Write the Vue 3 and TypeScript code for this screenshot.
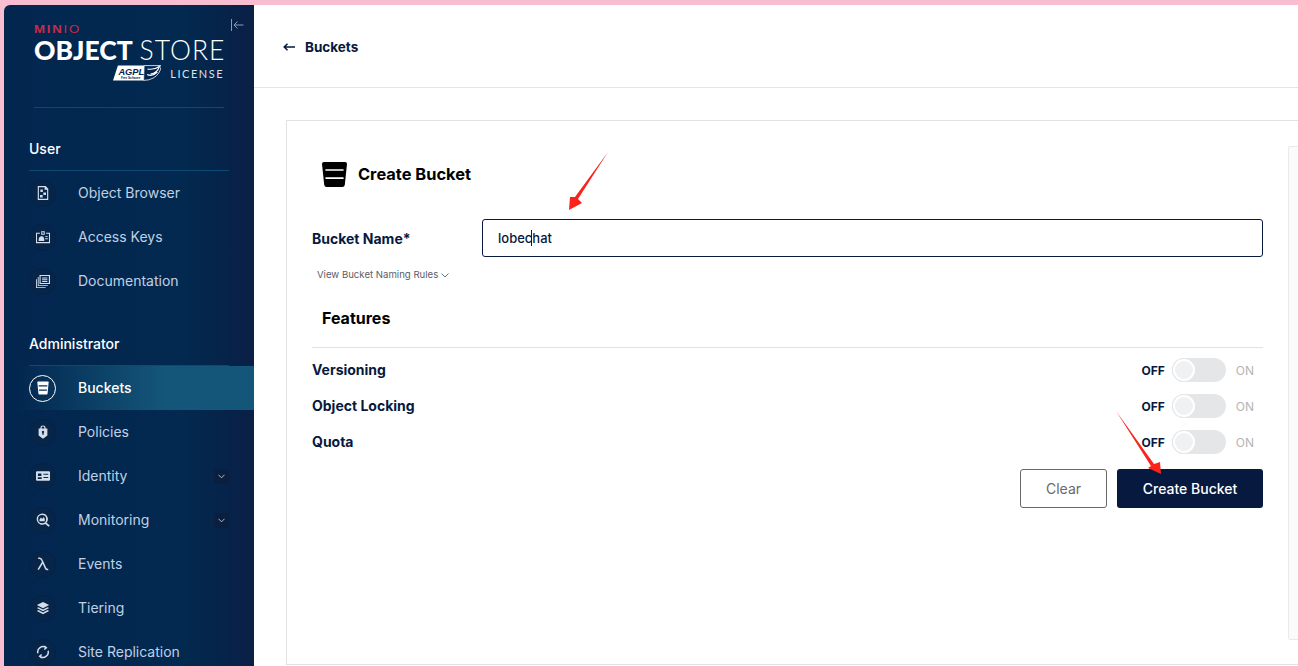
<script setup lang="ts">
interface NavItem {
  label: string
  fill?: string
  stroke?: string
  active?: boolean
  chevron?: boolean
}

const bucketPath =
  'M1.5 1.2Q1.5 .5 2.2 .5H13.8Q14.5 .5 14.5 1.2L13.2 14.6Q13.1 15.5 12.2 15.5H3.8Q2.9 15.5 2.8 14.6ZM3 4.8 3.1 6.2H12.9L13 4.8ZM3.5 9.6 3.6 11H12.4L12.5 9.6Z'

const titleBucketPath =
  'M0 1.2Q0 0 1.2 0H14.8Q16 0 16 1.2L14.6 14.6Q14.4 16 13 16H3Q1.6 16 1.4 14.6ZM2.2 4.6V5.6H13.8V4.6ZM2.2 9.8V10.8H13.8V9.8Z'

const userItems: NavItem[] = [
  {
    label: 'Object Browser',
    fill: 'M2 0H11L14 3V16H2ZM3.3 1.3V14.7H12.7V4.2H9.8V1.3ZM5 4H7.8V6.8H5ZM8.4 7.4H11.4V10.2H8.4ZM4.6 10.2H7.6V13H4.6Z',
  },
  {
    label: 'Access Keys',
    fill: 'M0 3H4.5V4.2H1.2V13.8H14.8V4.2H11.5V3H16V15H0ZM6 1.5H10V5.5H6ZM7.1 2.6V4.4H8.9V2.6ZM3 11.5Q3 7 6.5 7H6.8Q9.5 7 9.5 12.5H3ZM10.5 7H13.5V8H10.5ZM10.5 9.5H13.5V10.5H10.5Z',
  },
  {
    label: 'Documentation',
    fill: 'M4 1H16V11.5H4ZM5.3 2.3V10.2H14.7V2.3ZM7 4H13V5H7ZM7 6H13V7H7ZM7 8H13V9H7ZM2 3.5H3V12.8H13.5V13.8H2ZM0 6H1V15H11V16H0Z',
  },
]

const adminItems: NavItem[] = [
  { label: 'Buckets', fill: bucketPath, active: true },
  {
    label: 'Policies',
    fill: 'M5 4V3Q5 .5 8 .5T11 3V4H13V12L8 15.8 3 12V4ZM6.4 4H9.6V3Q9.6 1.8 8 1.8T6.4 3ZM8 6.5A1.4 1.4 0 0 0 7.2 9V11H8.8V9A1.4 1.4 0 0 0 8 6.5Z',
  },
  {
    label: 'Identity',
    fill: 'M1.2 2.5H14.8Q16 2.5 16 3.7V12.3Q16 13.5 14.8 13.5H1.2Q0 13.5 0 12.3V3.7Q0 2.5 1.2 2.5ZM2.2 5V8H6.2V5ZM2 9.5V11.5H6.5V9.5ZM8.5 5.5V6.7H14V5.5ZM8.5 9V10.2H14V9Z',
    chevron: true,
  },
  {
    label: 'Monitoring',
    fill: 'M7 .5A6.5 6.5 0 0 1 12 11.2L15.8 14.2 14.4 15.8 10.6 12.6A6.5 6.5 0 1 1 7 .5ZM7 2.4A4.6 4.6 0 1 0 7 11.6 4.6 4.6 0 0 0 7 2.4ZM4 7.4 5.6 5.2 7 6.8 8.6 4.6 10 6.6V9.5H4Z',
    chevron: true,
  },
  { label: 'Events', stroke: 'M2.5 1.5H4.2Q6 1.5 7 4L11 13Q11.6 14.5 14 14.2M7.6 6 2.5 14.5' },
  {
    label: 'Tiering',
    fill: 'M8 1 15 4.6 8 8.2 1 4.6ZM2.8 7 8 9.7 13.2 7 15 8 8 11.6 1 8ZM2.8 10.4 8 13.1 13.2 10.4 15 11.4 8 15 1 11.4Z',
  },
  {
    label: 'Site Replication',
    stroke: 'M2.2 9.5A6 6 0 0 1 11.5 3M13.8 6.5A6 6 0 0 1 4.5 13M9.5 1.2 11.8 3.2 9.5 5.2M6.5 10.8 4.2 12.8 6.5 14.8',
  },
]

const features = ['Versioning', 'Object Locking', 'Quota']
</script>

<template>
  <div class="page">
    <aside class="sidebar">
      <div class="brand">
        <svg class="collapse" viewBox="0 0 13 12" width="13" height="12" aria-hidden="true">
          <path d="M.5 0V12M12.5 6H3M6.5 2.5 3 6 6.5 9.5" fill="none" stroke="#8b9cb5" stroke-width="1" />
        </svg>
        <div class="minio"><b>MIN</b><span>IO</span></div>
        <div class="product"><b>OBJECT</b> <span>STORE</span></div>
        <div class="license-row">
          <svg class="agpl" viewBox="0 0 49 16" width="49" height="16" aria-hidden="true">
            <path d="M5 .5H32L31 15.5H0Z" fill="#fff" />
            <path d="M31.5 .5H49Q48 9 41 13 37 15.5 31 15.5Z" fill="#03264e" stroke="#fff" stroke-width=".8" />
            <path d="M35 4Q42 5 47 1.5 45 8 38 9M34.5 9.5Q40 12 45 7" fill="none" stroke="#fff" stroke-width="1.2" />
            <text x="5.5" y="10.5" font-size="9.4" font-weight="700" font-style="italic" fill="#03264e" font-family="Liberation Sans, sans-serif">AGPL</text>
            <text x="8" y="14.3" font-size="3" font-weight="700" fill="#03264e" font-family="Liberation Sans, sans-serif">Free Software</text>
          </svg>
          <span class="license">LICENSE</span>
        </div>
      </div>
      <div class="brand-rule"></div>

      <div class="section-label first">User</div>
      <div class="section-rule"></div>
      <nav class="nav">
        <div v-for="item in userItems" :key="item.label" class="nav-item">
          <span class="nav-icon">
            <svg viewBox="0 0 16 16" width="14" height="14" aria-hidden="true">
              <path v-if="item.fill" :d="item.fill" fill="currentColor" fill-rule="evenodd" />
            </svg>
          </span>
          <span class="nav-text">{{ item.label }}</span>
        </div>
      </nav>

      <div class="section-label second">Administrator</div>
      <div class="section-rule"></div>
      <nav class="nav">
        <div
          v-for="item in adminItems"
          :key="item.label"
          class="nav-item"
          :class="{ active: item.active }"
        >
          <span class="nav-icon">
            <svg viewBox="0 0 16 16" width="14" height="14" aria-hidden="true">
              <path v-if="item.fill" :d="item.fill" fill="currentColor" fill-rule="evenodd" />
              <path v-if="item.stroke" :d="item.stroke" fill="none" stroke="currentColor" stroke-width="1.7" />
            </svg>
          </span>
          <span class="nav-text">{{ item.label }}</span>
          <span v-if="item.chevron" class="chevron">
            <svg viewBox="0 0 8 5" width="7" height="5" aria-hidden="true">
              <path d="M.5 .5 4 4 7.5 .5" fill="none" stroke="#c5d2e2" stroke-width="1" />
            </svg>
          </span>
        </div>
      </nav>
    </aside>

    <main class="main">
      <header class="topbar">
        <svg viewBox="0 0 12 8" width="12" height="8" aria-hidden="true">
          <path d="M12 4H1.5M4.5 .8 1.2 4 4.5 7.2" fill="none" stroke="#07193e" stroke-width="1.5" />
        </svg>
        <span class="crumb">Buckets</span>
      </header>

      <section class="card">
        <form class="form" @submit.prevent>
          <div class="title-row">
            <svg viewBox="0 0 16 16" width="25" height="25" aria-hidden="true">
              <path :d="titleBucketPath" fill="#000" fill-rule="evenodd" />
            </svg>
            <h1 class="title">Create Bucket</h1>
          </div>

          <div class="name-row">
            <label class="field-label">Bucket Name*</label>
            <div class="input">lobec<i class="caret"></i>hat</div>
          </div>

          <div class="rules">
            <span>View Bucket Naming Rules</span>
            <svg viewBox="0 0 8 5" width="8" height="5" aria-hidden="true">
              <path d="M.5 .5 4 4 7.5 .5" fill="none" stroke="#55607a" stroke-width=".9" />
            </svg>
          </div>

          <h2 class="features-title">Features</h2>
          <div class="features-rule"></div>

          <div class="feature-list">
            <div v-for="feature in features" :key="feature" class="feature">
              <span class="field-label">{{ feature }}</span>
              <div class="switch-group">
                <span class="off">OFF</span>
                <span class="track"><span class="knob"></span></span>
                <span class="on">ON</span>
              </div>
            </div>
          </div>

          <div class="actions">
            <button type="button" class="btn clear">Clear</button>
            <button type="button" class="btn create">Create Bucket</button>
          </div>
        </form>
        <div class="help-panel"></div>
      </section>
    </main>

    <svg class="annotations" viewBox="0 0 1298 666" width="1298" height="666" aria-hidden="true">
      <path d="M608 152 578 199 582 203 569 210 570 197 575 197Z" fill="#f8231a" />
      <path d="M1116 411 1154 464 1160 462 1161 474 1148 468 1151 466Z" fill="#f8231a" />
    </svg>
  </div>
</template>

<style>
html,
body {
  margin: 0;
  padding: 0;
  background: #fff;
}
</style>

<style scoped>
.page {
  position: relative;
  display: flex;
  width: 1298px;
  height: 666px;
  padding: 5px 0 0 4px;
  box-sizing: border-box;
  overflow: hidden;
  background: #f9bdd2;
  font-family: Inter, "Liberation Sans", sans-serif;
}

.sidebar {
  flex: 0 0 250px;
  height: 661px;
  overflow: hidden;
  border-radius: 6px 0 0 0;
  background: linear-gradient(90deg, #03264f 0%, #02294f 72%, #0a1f46 100%);
  color: #fff;
}

.brand {
  position: relative;
  height: 102px;
  box-sizing: border-box;
  padding: 19px 30px 0;
}

.collapse {
  position: absolute;
  top: 14px;
  left: 227px;
}

.minio {
  height: 11px;
  font-family: "Liberation Sans", sans-serif;
  font-size: 10.5px;
  line-height: 11px;
  letter-spacing: 1.4px;
  color: #c72c48;
  transform: scaleX(1.26);
  transform-origin: left;
}

.minio b {
  font-weight: 700;
}

.minio span {
  font-weight: 400;
}

.product {
  margin-top: 2px;
  height: 26px;
  font-family: Lato, sans-serif;
  font-size: 26.5px;
  line-height: 26px;
  white-space: nowrap;
}

.product b {
  font-weight: 900;
}

.product span {
  font-weight: 300;
  letter-spacing: 1px;
}

.license-row {
  display: flex;
  align-items: center;
  gap: 9px;
  margin: 2px 0 0 79px;
  height: 16px;
}

.license {
  font-family: Lato, sans-serif;
  font-size: 11px;
  letter-spacing: 1.5px;
  color: #dbe3ec;
}

.brand-rule,
.section-rule {
  margin-left: 25px;
  width: 200px;
  height: 1px;
  background: #0c4a73;
}

.brand-rule {
  margin-left: 30px;
  width: 190px;
}

.section-label {
  margin-left: 25px;
  font-size: 14px;
  line-height: 18px;
  font-weight: 500;
  color: #fff;
}

.section-label.first {
  margin-top: 32px;
  margin-bottom: 12px;
}

.section-label.second {
  margin-top: 32px;
  margin-bottom: 12px;
}

.nav-item {
  display: flex;
  align-items: center;
  height: 44px;
  padding: 0 25px;
  color: #c0d0e4;
}

.nav-item.active {
  color: #fff;
  background: linear-gradient(90deg, rgba(20, 86, 122, 0) 5%, #14567a 65%);
}

.nav-icon {
  flex: 0 0 27px;
  display: flex;
  align-items: center;
  justify-content: center;
  width: 27px;
  height: 27px;
  box-sizing: border-box;
  border-radius: 50%;
  background: #072549;
  border: 1px solid #062247;
  color: #d5dfeb;
}

.active .nav-icon {
  background: transparent;
  border-color: #fff;
  color: #fff;
}

.nav-text {
  flex: 1;
  margin-left: 22px;
  font-size: 14px;
  line-height: 18px;
}

.active .nav-text {
  font-weight: 500;
}

.chevron {
  display: flex;
  align-items: center;
  justify-content: center;
  width: 15px;
  height: 15px;
  border-radius: 3px;
  background: #0a1e40;
}

.main {
  flex: 1;
  min-width: 0;
  background: #fff;
}

.topbar {
  display: flex;
  align-items: center;
  gap: 10px;
  height: 83px;
  box-sizing: border-box;
  padding: 1px 0 0 29px;
  border-bottom: 1px solid #e5e5e5;
}

.crumb {
  font-size: 13.5px;
  font-weight: 700;
  color: #07193e;
}

.card {
  display: flex;
  gap: 25px;
  width: 1100px;
  height: 545px;
  margin: 32px 0 0 32px;
  padding: 25px;
  box-sizing: border-box;
  border: 1px solid #e2e2e2;
}

.form {
  flex: 0 0 951px;
}

.title-row {
  display: flex;
  align-items: center;
  gap: 11px;
  height: 25px;
  margin: 16px 0 0 10px;
}

.title {
  margin: 0;
  font-size: 16.4px;
  line-height: 25px;
  font-weight: 700;
  color: #000;
}

.name-row {
  display: flex;
  align-items: center;
  margin-top: 32px;
}

.field-label {
  font-size: 14px;
  line-height: 18px;
  font-weight: 700;
  color: #07193e;
}

.name-row .field-label {
  flex: 0 0 170px;
  padding-top: 2px;
}

.input {
  flex: 1;
  height: 38px;
  box-sizing: border-box;
  padding-left: 15px;
  border: 1px solid #07193e;
  border-radius: 3px;
  font-size: 13px;
  font-weight: 500;
  line-height: 36px;
  color: #07193e;
}

.caret {
  display: inline-block;
  width: 1px;
  height: 16px;
  margin-left: -1px;
  vertical-align: -3px;
  background: #07193e;
}

.rules {
  display: flex;
  align-items: center;
  gap: 3px;
  height: 14px;
  margin: 11px 0 0 5px;
  font-size: 9.6px;
  line-height: 14px;
  color: #5c5c66;
}

.features-title {
  margin: 25px 0 0 10px;
  font-size: 16px;
  line-height: 22px;
  font-weight: 700;
  color: #000;
}

.features-rule {
  height: 1px;
  margin-top: 18px;
  background: #e2e2e2;
}

.feature-list {
  margin-top: 4px;
}

.feature {
  display: flex;
  align-items: center;
  justify-content: space-between;
  height: 36px;
}

.switch-group {
  display: flex;
  align-items: center;
  margin-right: 9px;
  font-size: 12px;
}

.off {
  font-weight: 700;
  color: #07193e;
}

.on {
  margin-left: 10px;
  color: #b5b5b5;
}

.track {
  flex: none;
  display: flex;
  align-items: center;
  width: 54px;
  height: 24px;
  margin-left: 7px;
  border-radius: 12px;
  background: #e4e6e7;
}

.knob {
  width: 22px;
  height: 22px;
  margin-left: 1px;
  box-sizing: border-box;
  border-radius: 50%;
  border: 2px solid #fff;
  background: #eff1f2;
  box-shadow: 0 0 0 1px #e4e6e7;
}

.actions {
  display: flex;
  justify-content: flex-end;
  gap: 10px;
  margin-top: 9px;
}

.btn {
  height: 39px;
  box-sizing: border-box;
  border-radius: 3px;
  font-family: inherit;
  font-size: 14px;
}

.clear {
  width: 87px;
  border: 1px solid #696969;
  background: #fff;
  color: #696969;
}

.create {
  width: 146px;
  border: 0;
  background: #07193e;
  color: #fff;
  font-weight: 500;
}

.help-panel {
  flex: 0 0 200px;
  height: 492px;
  border: 1px solid #eaeaea;
  border-radius: 2px 0 0 2px;
  background: #fbfbfb;
}

.annotations {
  position: absolute;
  top: 0;
  left: 0;
  pointer-events: none;
}
</style>
